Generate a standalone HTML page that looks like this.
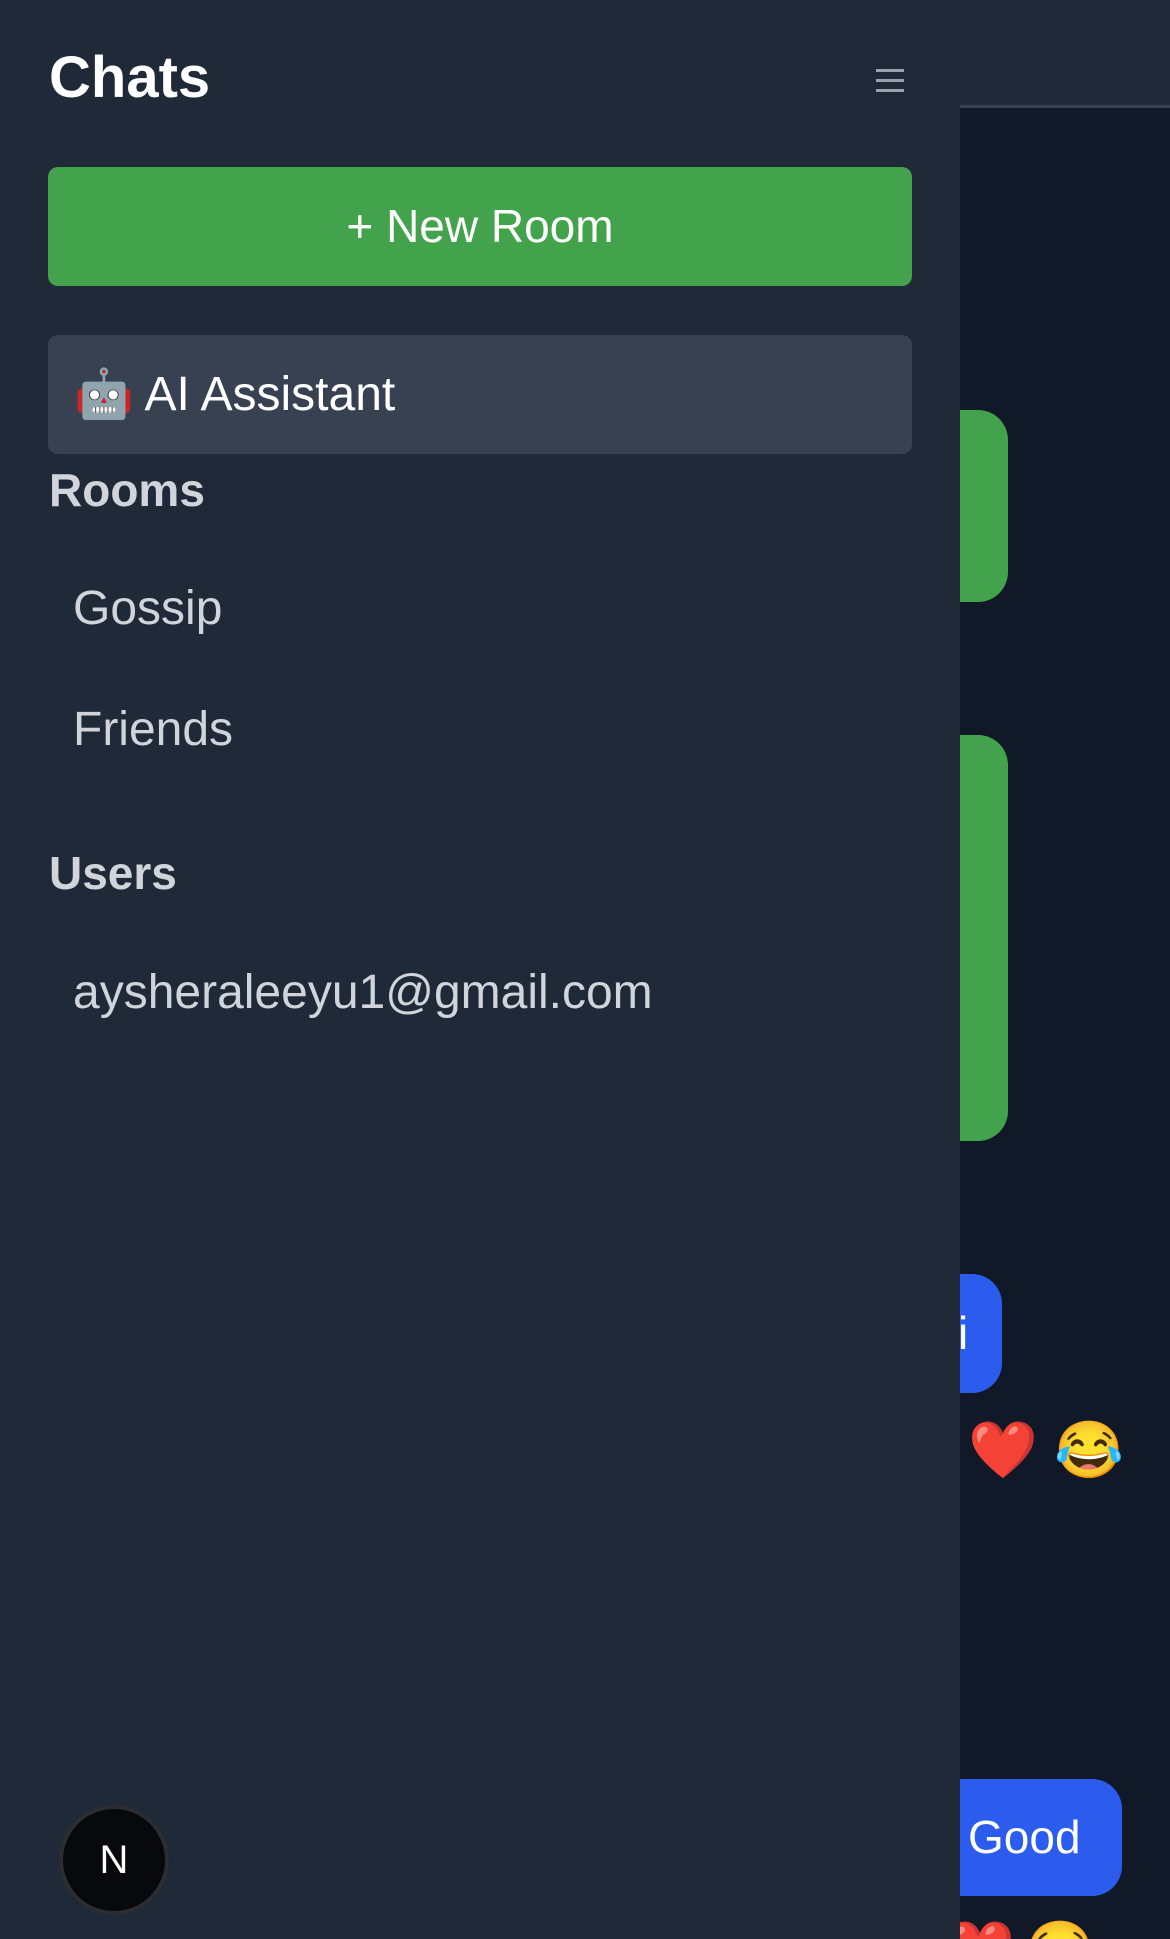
<!DOCTYPE html>
<html style="width:1170px;height:1939px;overflow:hidden"><head><meta charset="utf-8"><style>
*{margin:0;padding:0;box-sizing:border-box}
body{width:1170px;height:1939px;overflow:hidden;background:#111827;font-family:"Liberation Sans",sans-serif;position:relative}
.hdr{position:absolute;left:0;top:0;width:1170px;height:108px;background:#1f2937;border-bottom:3px solid #374151}
.b{position:absolute;border-radius:30px}
.side{position:absolute;left:0;top:0;width:960px;height:1939px;background:#1f2937}
.t{position:absolute;color:#d1d5db;font-size:48px;white-space:nowrap}
.em{position:absolute;font-size:56px;line-height:1}
</style></head><body>
<div class="hdr"></div>
<div class="b" style="left:900px;top:410px;width:108px;height:192px;background:#43a34c"></div>
<div class="b" style="left:900px;top:735px;width:108px;height:406px;background:#43a34c"></div>
<div class="b" style="left:900px;top:1274px;width:102px;height:119px;background:#2b5ced;color:#fff;font-size:46px;line-height:119px;padding-left:58px">i</div>
<div class="em" style="left:968px;top:1422px">❤️</div>
<div class="em" style="left:1054px;top:1422px">😂</div>
<div class="b" style="left:900px;top:1779px;width:222px;height:117px;background:#2b5ced;color:#fff;font-size:46px;line-height:117px;padding-left:68px">Good</div>
<div style="position:absolute;left:900px;top:1900px;width:270px;height:39px;overflow:hidden">
<div class="em" style="left:45px;top:22px">❤️</div>
<div class="em" style="left:125px;top:22px">😂</div>
</div>
<div class="side">
<div class="t" style="left:49px;top:44px;font-size:58px;font-weight:bold;color:#fff">Chats</div>
<div style="position:absolute;left:876px;top:69px;width:28px">
<div style="height:3px;background:#9ca3af;margin-bottom:7px"></div><div style="height:3px;background:#9ca3af;margin-bottom:7px"></div><div style="height:3px;background:#9ca3af"></div></div>
<div style="position:absolute;left:48px;top:167px;width:864px;height:119px;background:#43a34c;border-radius:10px;color:#fff;font-size:46px;text-align:center;line-height:119px">+ New Room</div>
<div style="position:absolute;left:48px;top:335px;width:864px;height:119px;background:#374151;border-radius:10px;color:#fff;font-size:48px;line-height:119px;padding-left:26px">🤖 AI Assistant</div>
<div class="t" style="left:49px;top:463px;font-weight:bold;font-size:46px">Rooms</div>
<div class="t" style="left:73px;top:581px">Gossip</div>
<div class="t" style="left:73px;top:702px">Friends</div>
<div class="t" style="left:49px;top:846px;font-weight:bold;font-size:46px">Users</div>
<div class="t" style="left:73px;top:965px">aysheraleeyu1@gmail.com</div>
<div style="position:absolute;left:59px;top:1805px;width:110px;height:110px;border-radius:50%;background:#07090d;border:4px solid #2b2d31;color:#fff;font-size:40px;text-align:center;line-height:102px">N</div>
</div>
</body></html>
